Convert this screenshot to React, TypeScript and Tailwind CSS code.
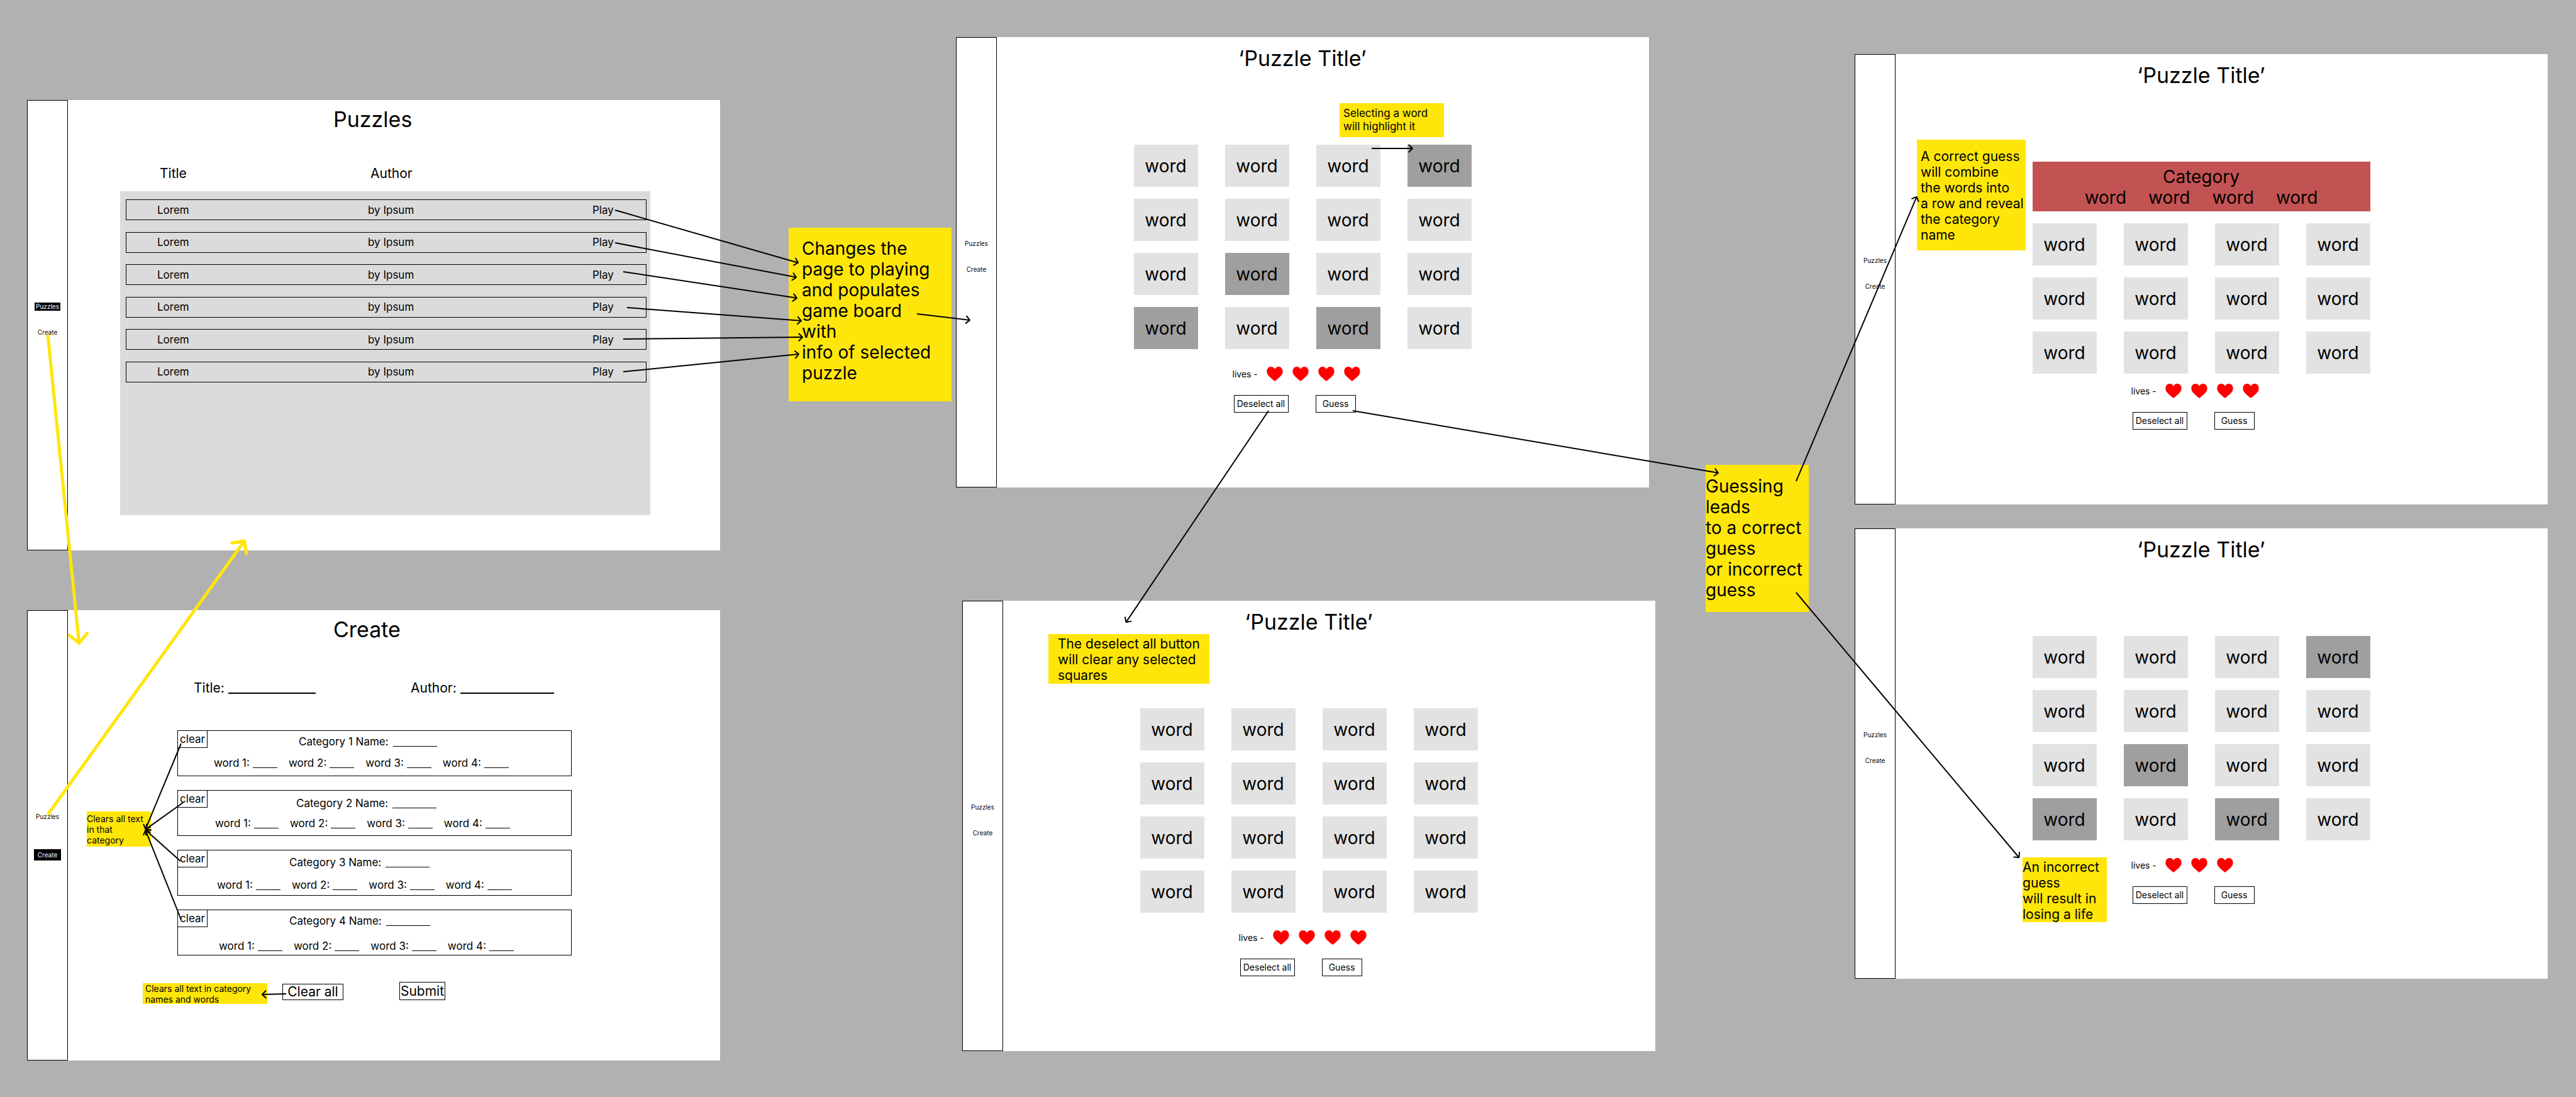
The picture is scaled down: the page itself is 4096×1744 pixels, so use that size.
import type { ReactNode } from "react";

type Point = [number, number];

const YELLOW = "#ffe60a";

/* ---------- shared pieces ---------- */

function SideNav({ active }: { active?: "puzzles" | "create" }) {
  const plain = "leading-[13px]";
  return (
    <nav
      className={
        active === "create"
          ? "flex w-[65px] shrink-0 flex-col items-center gap-[45px] border border-black pt-[321px] text-[10px]"
          : "flex w-[65px] shrink-0 flex-col items-center gap-7 border border-black pt-[321px] text-[10px]"
      }
    >
      <a href="#puzzles" className={active === "puzzles" ? "bg-black px-0.5 leading-[13px] text-white" : plain}>
        Puzzles
      </a>
      <a href="#create" className={active === "create" ? "bg-black px-1.5 leading-[18px] text-white" : plain}>
        Create
      </a>
    </nav>
  );
}

function Frame({ place, active, children }: { place: string; active?: "puzzles" | "create"; children: ReactNode }) {
  return (
    <section className={`absolute flex h-[716px] w-[1102px] bg-white ${place}`}>
      <SideNav active={active} />
      <div className="flex grow flex-col pr-[65px]">{children}</div>
    </section>
  );
}

function Note({ place, lines }: { place: string; lines: string[] }) {
  return (
    <aside className={`absolute whitespace-nowrap bg-[#ffe60a] ${place}`}>
      {lines.map((line, i) => (
        <p key={i}>{line}</p>
      ))}
    </aside>
  );
}

function Arrow({ from, to, color = "black", width = 2 }: { from: Point; to: Point; color?: string; width?: number }) {
  const angle = Math.atan2(to[1] - from[1], to[0] - from[0]);
  const tip: Point = [to[0] - (Math.cos(angle) * width) / 2, to[1] - (Math.sin(angle) * width) / 2];
  const arm = width * 4;
  const end = (turn: number) =>
    `${tip[0] - arm * Math.cos(angle + turn)} ${tip[1] - arm * Math.sin(angle + turn)}`;
  return (
    <g stroke={color} strokeWidth={width} fill="none">
      <path d={`M${from[0]} ${from[1]}L${tip[0]} ${tip[1]}`} />
      <path
        d={`M${end(Math.PI / 4)}L${tip[0]} ${tip[1]}L${end(-Math.PI / 4)}`}
        strokeLinecap="round"
        strokeLinejoin="round"
      />
    </g>
  );
}

function Heart() {
  return (
    <svg viewBox="0 0 30 27" className="h-[23px] w-[26px]" aria-hidden="true">
      <path
        fill="#ff0000"
        d="M15 27C9.6 22.4 2.8 17.6.9 12.8-1.4 6.8 1.6 0 8 0c3 0 5.600 1.600 7 4.600C16.400 1.600 19 0 22 0c6.400 0 9.400 6.800 7.100 12.800C27.200 17.600 20.400 22.400 15 27Z"
      />
    </svg>
  );
}

/* ---------- puzzle list ---------- */

function PuzzleList() {
  return (
    <>
      <h1 className="mx-auto mt-[10px] w-32 text-[34px] leading-[42px]">Puzzles</h1>
      <table className="ml-[83px] mt-[52px] flex w-[843px] flex-col">
        <thead className="block">
          <tr className="grid grid-cols-[335px_357px_1fr] pl-[63px] text-left text-[21px] leading-[26px]">
            <th className="font-normal">Title</th>
            <th className="font-normal">Author</th>
            <td />
          </tr>
        </thead>
        <tbody className="mt-[15px] flex h-[515px] flex-col justify-between bg-[#dbdbdb] pb-[211px] pl-[9px] pr-[6px] pt-[13px]">
          {Array.from({ length: 6 }, (_, i) => (
            <tr
              key={i}
              className="grid h-[33px] grid-cols-[335px_357px_1fr] items-center border border-black pl-[49px] text-[17px] leading-5"
            >
              <td>Lorem</td>
              <td>by Ipsum</td>
              <td>
                <button>Play</button>
              </td>
            </tr>
          ))}
        </tbody>
      </table>
    </>
  );
}

/* ---------- create form ---------- */

const categories = [
  { box: "gap-[14px] pt-[7px]", name: "pl-[192px]", words: "pl-[57px]" },
  { box: "gap-[12px] pt-[10px]", name: "pl-[188px]", words: "pl-[59px]" },
  { box: "gap-[16px] pt-[9px]", name: "pl-[177px]", words: "pl-[62px]" },
  { box: "gap-[20px] pt-[7px]", name: "pl-[177px]", words: "pl-[65px]" },
];

function CreateForm() {
  return (
    <form className="flex flex-col" onSubmit={(e) => e.preventDefault()}>
      <h1 className="mx-auto mt-[10px] w-32 text-[34px] leading-[42px]">Create</h1>
      <div className="mt-[60px] flex pl-[200px] text-[21px] leading-6">
        <label className="flex w-[345px] gap-[6px]">
          Title: <input className="h-[21px] w-[139px] border-b-2 border-black outline-none" />
        </label>
        <label className="flex gap-[6px]">
          Author: <input className="h-[21px] w-[149px] border-b-2 border-black outline-none" />
        </label>
      </div>
      <div className="ml-[174px] mt-[55px] flex w-[627px] flex-col gap-[22px] text-[17px] leading-5">
        {categories.map((c, i) => (
          <fieldset key={i} className={`relative flex h-[73px] flex-col border border-black ${c.box}`}>
            <button
              type="button"
              className="absolute -left-px -top-px flex h-7 w-12 items-center justify-center border border-black"
            >
              clear
            </button>
            <label className={`flex gap-[7px] ${c.name}`}>
              Category {i + 1} Name:
              <input className="h-[18px] w-[70px] border-b border-black outline-none" />
            </label>
            <div className={`flex gap-[18px] ${c.words}`}>
              {[1, 2, 3, 4].map((n) => (
                <label key={n} className="flex gap-[5px]">
                  word {n}:
                  <input className="h-[18px] w-[39px] border-b border-black outline-none" />
                </label>
              ))}
            </div>
          </fieldset>
        ))}
      </div>
      <div className="ml-[341px] mt-[42px] flex items-end gap-[89px] text-[21px]">
        <button type="button" className="h-[26px] w-[97px] border border-black leading-6">
          Clear all
        </button>
        <button type="submit" className="h-[29px] w-[73px] whitespace-nowrap border border-black leading-[27px]">
          Submit
        </button>
      </div>
    </form>
  );
}

/* ---------- game board ---------- */

function Game({
  rows = 4,
  selected = [],
  lives = 4,
  solved = false,
}: {
  rows?: number;
  selected?: number[];
  lives?: number;
  solved?: boolean;
}) {
  return (
    <>
      <h1 className="mt-[13px] text-center text-[34px] leading-[42px]">‘Puzzle Title’</h1>
      <div className="mx-auto mt-[116px] w-[537px]">
        <div className="flex h-[353px] flex-col gap-[19px] text-[28px] leading-[33px]">
          {solved && (
            <div className="flex h-[79px] flex-col items-center bg-[#c35353] pt-2">
              <p>Category</p>
              <div className="flex gap-[35px]">
                {[0, 1, 2, 3].map((n) => (
                  <span key={n}>word</span>
                ))}
              </div>
            </div>
          )}
          <div className="grid grid-cols-4 gap-x-[43px] gap-y-[19px]">
            {Array.from({ length: rows * 4 }, (_, i) => (
              <button
                key={i}
                aria-pressed={selected.includes(i)}
                className={selected.includes(i) ? "h-[67px] bg-[#9f9f9f] pt-0.5" : "h-[67px] bg-[#e2e2e2] pt-0.5"}
              >
                word
              </button>
            ))}
          </div>
        </div>
        <div className="flex pl-[157px] text-sm leading-[23px]">
          <span className="w-[54px]">lives -</span>
          <div className="flex gap-[15px]">
            {Array.from({ length: lives }, (_, i) => (
              <Heart key={i} />
            ))}
          </div>
        </div>
        <div className="mt-[22px] flex gap-[43px] pl-[159px] text-sm">
          <button className="h-7 w-[87px] border border-black">Deselect all</button>
          <button className="h-7 w-16 border border-black">Guess</button>
        </div>
      </div>
    </>
  );
}

/* ---------- connectors between screens ---------- */

const connectors: [Point, Point][] = [
  [[978, 334], [1270, 418]],
  [[978, 386], [1267, 441]],
  [[991, 432], [1268, 474]],
  [[997, 489], [1275, 510]],
  [[991, 539], [1277, 536]],
  [[991, 591], [1271, 563]],
  [[1458, 499], [1543, 509]],
  [[2181, 236], [2247, 236]],
  [[2017, 653], [1790, 990]],
  [[2151, 653], [2733, 752]],
  [[2856, 765], [3048, 312]],
  [[2856, 942], [3211, 1364]],
  [[288, 1182], [231, 1319]],
  [[291, 1276], [231, 1319]],
  [[287, 1369], [231, 1319]],
  [[288, 1462], [231, 1319]],
  [[455, 1580], [416, 1581]],
];

export default function App() {
  return (
    <main className="relative min-h-screen w-full overflow-hidden bg-[#b1b1b1] font-['Inter',sans-serif] text-black">
      <Frame place="left-[43px] top-[159px]" active="puzzles">
        <PuzzleList />
      </Frame>
      <Frame place="left-[43px] top-[970px]" active="create">
        <CreateForm />
      </Frame>
      <Frame place="left-[1520px] top-[59px]">
        <Game selected={[3, 9, 12, 14]} />
      </Frame>
      <Frame place="left-[1530px] top-[955px]">
        <Game />
      </Frame>
      <Frame place="left-[2949px] top-[86px]">
        <Game rows={3} solved />
      </Frame>
      <Frame place="left-[2949px] top-[840px]">
        <Game selected={[3, 9, 12, 14]} lives={3} />
      </Frame>

      <Note
        place="left-[138px] top-[1290px] h-14 w-[102px] pt-[3px] text-sm leading-[17px]"
        lines={["Clears all text", "in that", "category"]}
      />
      <Note
        place="left-[227px] top-[1563px] h-[33px] w-[198px] pl-1 text-sm leading-[17px]"
        lines={["Clears all text in category", "names and words"]}
      />
      <Note
        place="left-[1254px] top-[362px] h-[276px] w-[259px] pl-[21px] pt-[17px] text-[28px] leading-[33px]"
        lines={["Changes the", "page to playing", "and populates", "game board", "with", "info of selected", "puzzle"]}
      />
      <Note
        place="left-[2130px] top-[164px] h-[54px] w-[166px] pl-1.5 pt-[6px] text-[17px] leading-[21px]"
        lines={["Selecting a word", "will highlight it"]}
      />
      <Note
        place="left-[1667px] top-[1008px] h-[79px] w-64 pl-[15px] pt-[3px] text-[21px] leading-[25px]"
        lines={["The deselect all button", "will clear any selected", "squares"]}
      />
      <Note
        place="left-[2712px] top-[739px] h-[234px] w-[164px] pt-[18px] text-[28px] leading-[33px]"
        lines={["Guessing", "leads", "to a correct", "guess", "or incorrect", "guess"]}
      />
      <Note
        place="left-[3048px] top-[222px] h-44 w-[173px] pl-1.5 pt-[14px] text-[21px] leading-[25px]"
        lines={["A correct guess", "will combine", "the words into", "a row and reveal", "the category", "name"]}
      />
      <Note
        place="left-[3216px] top-[1363px] h-[103px] w-[134px] pt-[3px] text-[21px] leading-[25px]"
        lines={["An incorrect", "guess", "will result in", "losing a life"]}
      />

      <svg className="pointer-events-none absolute left-0 top-0 size-full overflow-visible" aria-hidden="true">
        {connectors.map(([from, to], i) => (
          <Arrow key={i} from={from} to={to} />
        ))}
        <Arrow from={[76, 532]} to={[126, 1025]} color={YELLOW} width={5} />
        <Arrow from={[76, 1295]} to={[390, 858]} color={YELLOW} width={5} />
      </svg>
    </main>
  );
}
